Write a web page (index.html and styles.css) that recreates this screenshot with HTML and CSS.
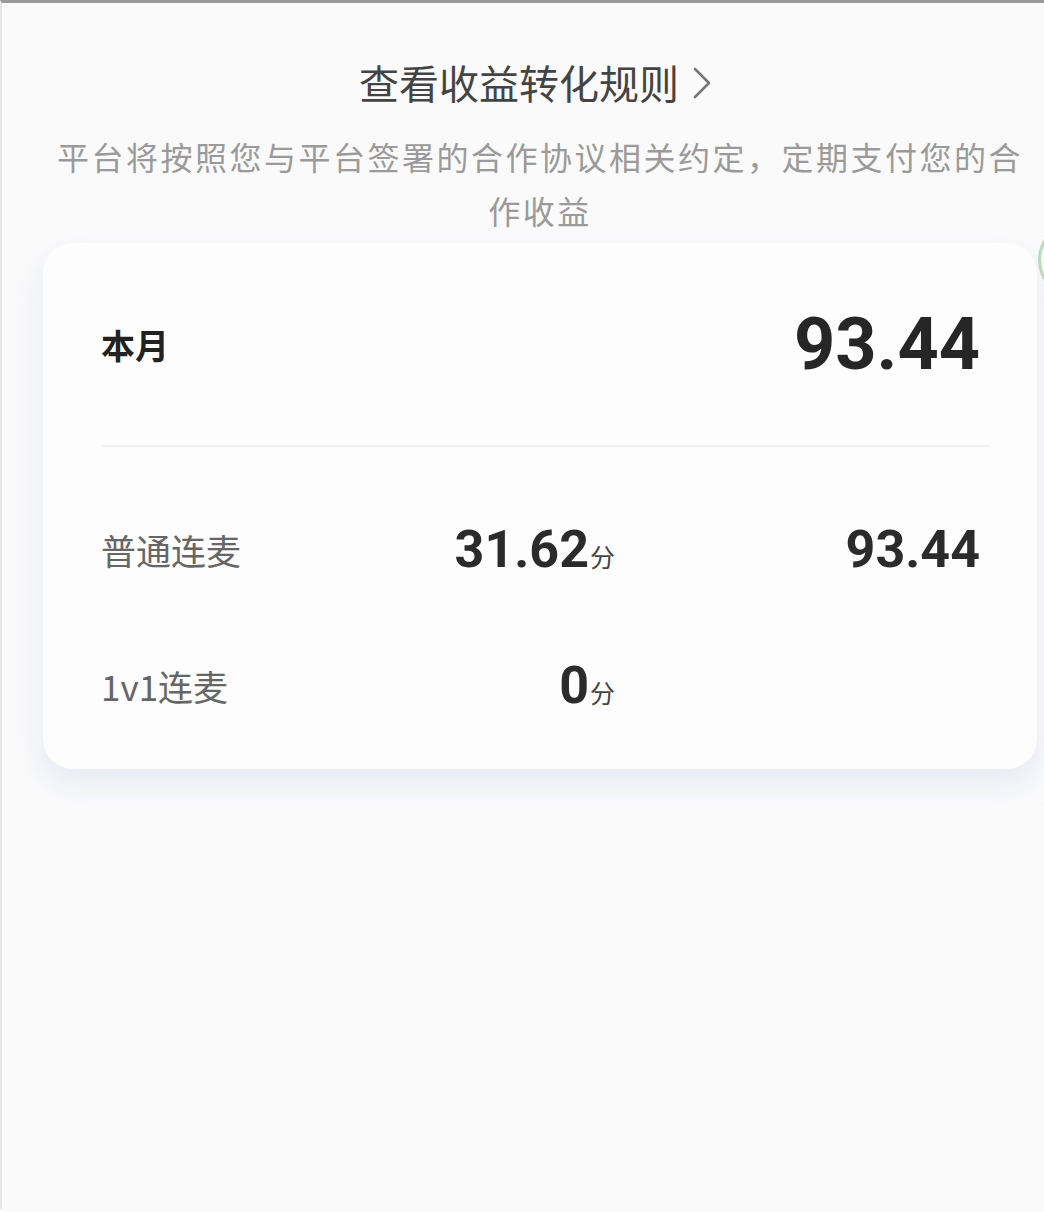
FILE: index.html
```html
<!DOCTYPE html>
<html>
<head>
    <title>收益</title>
    <link rel="stylesheet" href="styles.css">
</head>
<body>
    <div class="page">
        <div class="rules">
            <span>查看收益转化规则</span>
            <svg class="chevron" width="22" height="34" viewBox="0 0 22 34">
                <path d="M4 3 L18 17 L4 31" fill="none" stroke="#777" stroke-width="2.6" stroke-linecap="round" stroke-linejoin="round"/>
            </svg>
        </div>
        <p class="notice">平台将按照您与平台签署的合作协议相关约定，定期支付您的合作收益</p>

        <div class="card">
            <div class="month">
                <span class="month-label">本月</span>
                <span class="month-value">93.44</span>
            </div>
            <div class="divider"></div>
            <div class="rows">
                <span class="label">普通连麦</span>
                <span class="score">31.62<small>分</small></span>
                <span class="amount">93.44</span>

                <span class="label">1v1连麦</span>
                <span class="score">0<small>分</small></span>
                <span class="amount"></span>
            </div>
        </div>
    </div>
    <!-- 右侧悬浮按钮，只露出一条边 -->
    <div class="float-btn"></div>
</body>
</html>
```

FILE: styles.css
```css
html {
    overflow: hidden;
}
body {
    margin: 0;
    font-family: "Noto Sans CJK SC", "Noto Sans", sans-serif;
    background-color: #fafafb;
    border-top: 3px solid #9a9a9a;
    border-left: 2px solid #e6e6e8;
    min-height: 1209px;
    box-sizing: border-box;
    position: relative;
}
.page {
    padding: 50px 7px 0 41px;
}
.rules {
    display: flex;
    justify-content: center;
    align-items: center;
    gap: 12px;
    font-size: 40px;
    color: #444;
    line-height: 58px;
    padding-right: 8px;
}
.chevron {
    margin-top: 2px;
}
.notice {
    margin: 18px 0 0;
    font-size: 32px;
    line-height: 54px;
    letter-spacing: 2.5px;
    color: #9a9a9a;
    text-align: center;
}
.card {
    margin-top: 6px;
    background: #fdfdfd;
    border-radius: 30px;
    box-shadow: 0 14px 30px rgba(220, 226, 240, 0.7);
    padding: 0 57px 16px 58px;
}
.month {
    display: flex;
    justify-content: space-between;
    align-items: center;
    height: 202px;
}
.month-label {
    font-size: 34px;
    font-weight: bold;
    color: #222;
}
.month-value {
    font-family: Roboto, "Liberation Sans", sans-serif;
    font-size: 72px;
    font-weight: bold;
    color: #262626;
}
.divider {
    height: 2px;
    background: #f1f1f3;
    margin-right: -10px;
}
.rows {
    display: grid;
    grid-template-columns: 1fr 1fr 1fr;
    grid-auto-rows: 136px;
    align-items: center;
    padding-top: 34px;
}
.label {
    font-size: 35px;
    color: #666;
}
.score {
    justify-self: end;
    margin-right: 72px;
    font-family: Roboto, "Liberation Sans", sans-serif;
    font-size: 52px;
    font-weight: bold;
    color: #2b2b2b;
}
.score small {
    font-family: "Noto Sans CJK SC", sans-serif;
    font-size: 25px;
    font-weight: normal;
    color: #444;
    margin-left: 1px;
}
.amount {
    justify-self: end;
    font-family: Roboto, "Liberation Sans", sans-serif;
    font-size: 52px;
    font-weight: bold;
    color: #2b2b2b;
}
.float-btn {
    position: absolute;
    top: 219px;
    right: 0;
    width: 6px;
    height: 76px;
    overflow: hidden;
}
.float-btn::before {
    content: "";
    position: absolute;
    top: 0;
    left: 0;
    width: 70px;
    height: 70px;
    border-radius: 50%;
    border: 3px solid #b9dcbf;
    background: #f6f9f6;
}
```
